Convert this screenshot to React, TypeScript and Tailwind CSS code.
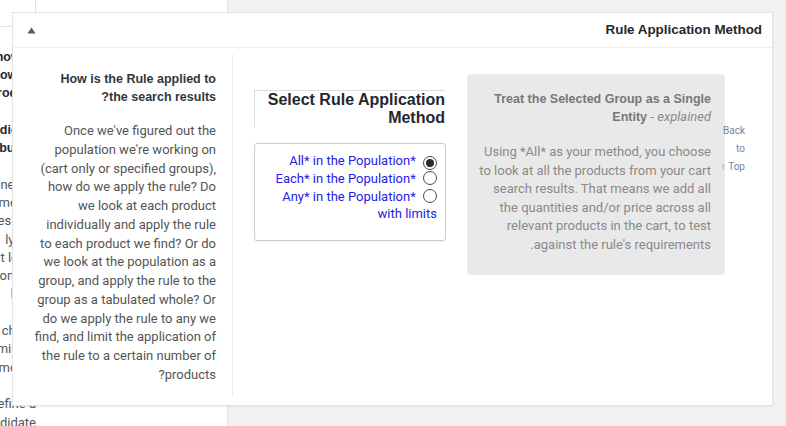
import React from 'react';

const body = "font-['Roboto','Liberation_Sans',sans-serif]";
const bold = "font-['Liberation_Sans',Arial,sans-serif] font-bold";

// cut-off lines of the page section lying behind the panel
const behindLines: { text: string; strong?: boolean }[] = [
  { text: 'how to', strong: true },
  { text: 'how do', strong: true },
  { text: 'product', strong: true },
  { text: '' },
  { text: 'indicate', strong: true },
  { text: 'tabulate', strong: true },
  { text: '' },
  { text: 'mine the' },
  { text: 'amount' },
  { text: 'les and' },
  { text: 'ly the' },
  { text: 'at least' },
  { text: 'ontext' },
  { text: 'here' },
  { text: '' },
  { text: 'check' },
  { text: 'mine it' },
  { text: 'amount' },
  { text: 'r to' },
  { text: 'define a' },
  { text: 'candidate' },
];

const explainLines = [
  "Once we've figured out the",
  "population we're working on",
  '(cart only or specified groups),',
  'how do we apply the rule? Do',
  'we look at each product',
  'individually and apply the rule',
  'to each product we find? Or do',
  'we look at the population as a',
  'group, and apply the rule to the',
  'group as a tabulated whole? Or',
  'do we apply the rule to any we',
  'find, and limit the application of',
  'the rule to a certain number of',
  'products?',
];

const singleLines = [
  'Using *All* as your method, you choose',
  'to look at all the products from your cart',
  'search results. That means we add all',
  'the quantities and/or price across all',
  'relevant products in the cart, to test',
  "against the rule's requirements.",
];

// broken lines inside an rtl block; only the closing line takes rtl punctuation
function Lines({ lines }: { lines: string[] }) {
  return (
    <>
      {lines.map((l, i) => {
        const last = i === lines.length - 1;
        return (
          <React.Fragment key={i}>
            <span dir={last ? 'rtl' : 'ltr'}>{l}</span>
            {!last && <br />}
          </React.Fragment>
        );
      })}
    </>
  );
}

function Radio({ checked }: { checked?: boolean }) {
  return (
    <span className="inline-flex w-[14px] h-[14px] ml-[4px] rounded-full border border-[#4a4a4a] bg-white items-center justify-center align-[-2px]">
      {checked && <span className="w-[8px] h-[8px] rounded-full bg-[#2b2b2b]" />}
    </span>
  );
}

export default function App() {
  return (
    <div className="relative w-[786px] h-[426px] overflow-hidden bg-[#f1f1f1]">
      {/* page behind the panel */}
      <div className="w-[228px] h-full bg-white border-r border-[#e2e2e2] flex flex-col">
        <div className="h-[27px] w-[36px] border-r border-b border-[#e2e2e2]" />
        <div dir="rtl" className={`w-[36px] overflow-hidden pt-[21px] text-[13px] leading-[18.3px] text-[#50575e] ${body}`}>
          {behindLines.map((l, i) => (
            <div
              key={i}
              className={`whitespace-nowrap h-[18.3px] ${l.strong ? `${bold} text-[12.5px] text-[#23282d]` : ''}`}
            >
              {l.text}
            </div>
          ))}
        </div>
      </div>

      {/* settings panel */}
      <div className="absolute left-[12px] top-[12px] w-[761px] h-[394px] bg-white border border-[#e3e3e3] shadow-[0_1px_2px_rgba(0,0,0,0.05)] flex flex-col">
        <div className="h-[35px] shrink-0 border-b border-[#eeeeee] flex items-center justify-between pl-[14px] pr-[10px]">
          <svg width="9" height="7" viewBox="0 0 9 7" className="mt-[1px]">
            <polygon points="4.5,0.5 8.5,6.5 0.5,6.5" fill="#5a5a5a" />
          </svg>
          <h2 className={`${bold} text-[13.4px] text-[#23282d]`}>Rule Application Method</h2>
        </div>

        <div className="flex flex-1 items-start">
          {/* explanation column */}
          <div dir="rtl" className="w-[220px] shrink-0 mt-[6px] h-[342px] border-r border-[#eeeeee] pr-[16px] pl-[12px] pt-[16px] text-right whitespace-nowrap">
            <h3 className={`${bold} text-[12.5px] leading-[18px] text-[#32373c]`}>
              <Lines lines={['How is the Rule applied to', 'the search results?']} />
            </h3>
            <p className={`${body} mt-[16px] text-[13px] leading-[18.75px] text-[#555555]`}>
              <Lines lines={explainLines} />
            </p>
          </div>

          {/* method selector */}
          <div className="ml-[21px] w-[192px] shrink-0 mt-[42px] flex flex-col">
            <div dir="rtl" className="border-t border-l border-[#dddddd] w-[191px]">
              <h3 className={`${bold} text-[16px] leading-[18px] text-[#23282d] text-right`}>
                Select Rule Application Method
              </h3>
            </div>
            <div
              dir="rtl"
              className={`mt-[16px] h-[98px] border border-[#cccccc] rounded-[3px] shadow-[0_1px_1px_rgba(0,0,0,0.06)] px-[8px] pt-[8px] text-[13px] leading-[17.7px] text-[#2323e4] ${body}`}
            >
              <div>
                <Radio checked /> <span dir="ltr">All* in the Population*</span>
              </div>
              <div>
                <Radio /> <span dir="ltr">Each* in the Population*</span>
              </div>
              <div>
                <Radio /> <span dir="ltr">Any* in the Population* with limits</span>
              </div>
            </div>
          </div>

          {/* explained box */}
          <div dir="rtl" className="ml-[21px] mt-[26px] w-[258px] h-[201px] shrink-0 bg-[#e9e9e9] rounded-[4px] px-[12px] pt-[16px] text-right">
            <h4 className={`${bold} text-[12.5px] leading-[18px] text-[#777777] pr-[2px]`}>
              Treat the Selected Group as a Single Entity{' '}
              <span className={`${body} font-normal italic text-[13px] text-[#8a8a8a]`}>- explained</span>
            </h4>
            <p className={`${body} mt-[17px] pr-[2px] text-[13px] leading-[18.6px] text-[#8a8a8a] whitespace-nowrap`}>
              <Lines lines={singleLines} />
            </p>
          </div>

          <a
            dir="rtl"
            href="#top"
            className={`${body} relative w-[20px] shrink-0 mt-[74px] text-[10px] leading-[18px] text-[#7484a3] text-right`}
          >
            Back to Top&nbsp;↑
          </a>
        </div>
      </div>
    </div>
  );
}
